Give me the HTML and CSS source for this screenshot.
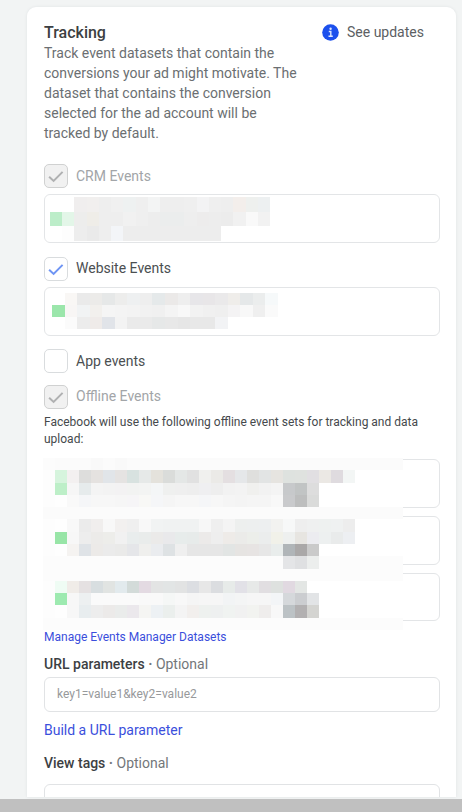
FILE: index.html
```html
<!DOCTYPE html>
<html lang="en">
<head>
<meta charset="utf-8">
<title>Tracking</title>
<link rel="stylesheet" href="styles.css">
</head>
<body>
<div class="viewport">
<main class="card">
  <header class="head">
    <div class="intro">
      <h1>Tracking</h1>
      <p>Track event datasets that contain the conversions your ad might motivate. The dataset that contains the conversion selected for the ad account will be tracked by default.</p>
    </div>
    <div class="updates">
      <svg width="17" height="17" viewBox="0 0 17 17"><circle cx="8.5" cy="8.5" r="8.3" fill="#1c50ed"/><circle cx="8.6" cy="4.7" r="1.2" fill="#dbe5ff"/><path d="M6.8 7.5h2v4.6M6.5 12.3h4.3" fill="none" stroke="#dbe5ff" stroke-width="1.4"/></svg>
      <span>See updates</span>
    </div>
  </header>

  <div class="option crm disabled">
    <span class="check"><svg viewBox="0 0 24 24"><path d="M4.5 12.8l4.9 4.6 9.8-9.9"/></svg></span><span class="label">CRM Events</span>
  </div>
  <div class="box"><div class="mosaic mosaic-crm" data-mosaic="crm"></div></div>

  <div class="option website">
    <span class="check"><svg viewBox="0 0 24 24"><path d="M4.5 12.8l4.9 4.6 9.8-9.9"/></svg></span><span class="label">Website Events</span>
  </div>
  <div class="box"><div class="mosaic mosaic-web" data-mosaic="web"></div></div>

  <div class="option app"><span class="check"></span><span class="label">App events</span></div>
  <div class="option offline disabled">
    <span class="check"><svg viewBox="0 0 24 24"><path d="M4.5 12.8l4.9 4.6 9.8-9.9"/></svg></span><span class="label">Offline Events</span>
  </div>
  <p class="note">Facebook will use the following offline event sets for tracking and data upload:</p>
  <div class="sets">
    <div class="box"></div>
    <div class="box"></div>
    <div class="box"></div>
    <div class="mosaic mosaic-sets" data-mosaic="sets"></div>
  </div>

  <a class="link manage">Manage Events Manager Datasets</a>
  <h2 class="url">URL parameters <span><b>·</b> Optional</span></h2>
  <div class="input">key1=value1&amp;key2=value2</div>
  <a class="link build">Build a URL parameter</a>
  <h2 class="tags">View tags <span><b>·</b> Optional</span></h2>
  <div class="input"></div>
</main>
</div>
<footer class="bar"></footer>
<script src="mosaic.js"></script>
</body>
</html>
```
FILE: styles.css
```css
* { box-sizing: border-box; }
body {
  margin: 0;
  height: 812px;
  overflow: hidden;
  background: #f2f4f4;
  font-family: Roboto, "Liberation Sans", sans-serif;
  font-size: 14px;
  color: #4b4f52;
}
.viewport { height: 799px; padding: 7px 6px 2px 27px; overflow: hidden; }
.card {
  height: 790px;
  padding: 15px 16px 0 17px;
  overflow: hidden;
  background: #fff;
  border-radius: 9px 9px 0 0;
  box-shadow: 0 0 3px #dfe2e3;
}
.bar { height: 13px; background: #c0c0c0; }
.head { display: flex; justify-content: space-between; height: 142px; }
.intro { width: 262px; }
h1 { margin: 0; font-size: 16px; line-height: 21px; font-weight: 500; color: #3c3f42; }
.intro p { margin: 0; line-height: 20px; color: #6b6f72; }
.updates { display: flex; gap: 8px; width: 118px; height: 20px; align-items: center; color: #5c6063; }
.updates svg { flex: none; }
.option { display: flex; gap: 8px; height: 24px; align-items: center; }
.check { width: 24px; height: 24px; border: 1px solid #d9dcde; border-radius: 5px; background: #fff; }
.check svg { display: block; width: 22px; height: 22px; fill: none; stroke: #6f95f4; stroke-width: 2.2; }
.disabled { color: #a2a5a8; }
.disabled .check { background: #f1f1f1; border-color: #d0d1d1; }
.disabled .check svg { stroke: #b0b1b2; }
.box { width: 396px; height: 49px; border: 1px solid #e3e5e7; border-radius: 6px; }
.crm, .website { margin-bottom: 6px; }
.website { margin-top: 14px; }
.app { margin-top: 13px; margin-bottom: 12px; }
.offline .label, .website .label { position: relative; top: -1px; }
.note { margin: 5px 0 11px; font-size: 12px; line-height: 17px; color: #45494c; }
.sets { position: relative; display: flex; flex-direction: column; justify-content: space-between; height: 162px; }
.sets .box:nth-child(3) { height: 48px; }
.mosaic { display: grid; }
.mosaic-crm { width: 220px; height: 44px; margin: 2px 0 0 5px; grid-template: repeat(3, 1fr) / repeat(18, 1fr); }
.mosaic-web { width: 226px; height: 36px; margin: 5px 0 0 7px; grid-template: repeat(3, 1fr) / repeat(18, 1fr); }
.mosaic-sets { position: absolute; left: -1px; top: -1px; width: 360px; height: 172px; grid-template: repeat(14, 1fr) / repeat(30, 12px); }
.link { display: block; color: #3b4fdc; }
.manage { margin-top: 7px; font-size: 12px; line-height: 18px; }
h2 { margin: 0; font-size: 14px; line-height: 20px; font-weight: 500; color: #3c4043; }
h2 span { font-weight: 400; color: #73777a; }
h2 b { font-weight: 700; }
.url { margin-top: 8px; margin-bottom: 3px; }
.input { width: 396px; height: 35px; padding: 0 12px; border: 1px solid #e1e3e5; border-radius: 6px; font-size: 12px; line-height: 33px; color: #97999b; }
.build { margin-top: 8px; line-height: 20px; }
.tags { margin-top: 13px; margin-bottom: 11px; }
```
FILE: mosaic.js
```js
// Tokens: two digits = grey level, six = colour, "." = empty, "*n" repeats the cell.
const rows = {
  crm: [
    ". . f0eeee f1efee eeeeee f0f0f0 eef1f1 ef f3f4f4 ee ee efefef f3f3f4 ef ee f3eeeb eef0ee edf0f1",
    "bcedc9 e3f6e8 ededec efede8 ee ee f1 ef ed ebeded ebeded ee edecec ed ec f1 f9 f2",
    ". fd ed ea ee f3f5f8 ed*8 . . . ."
  ],
  web: [
    ". f9f7f5 ea ecebe9 e6e8e8 ededec eef0f1 ee e5e9ea ebe9e8 ee e7e6e9 e8e6e8 eae9ea efedea e5e8e9 ebeded f6f9fa",
    "9be6ab f8f6f5 f1f3f4 f2f0ed f5 f4 f3 f1 f0 f4 f8 f2 f0 ef f4f3f4 f8 ef fa",
    ". fb ec efebe9 e1e4e9 f3 ea ea e6e8e8 e8 e6 e8 e8 f2f3f5 . . . ."
  ],
  sets: [
    "fc fb fb fb f9 fb f9 fb*23",
    "fd d6f4dd f3f0f0 dddddc e5e2e0 e1e5e9 e5e3e2 d8e2e0 e6e9e8 e4e2dc dadcda e4e7e6 e1 f0f0ee ebeae7 e4dfe1 e5e7e9 dfdfdd e2e4e4 e6e4e0 dee2df dfe2df e1dfe2 ebe8e4 dfdbdf f3f6f5 .*4",
    "fd bdefc8 f6 e6ebec f4 f3 f3f2f3 f2f3f2 f3f4f3 f4f6f7 eff0ef ef ee efeff1 ee f2 f3 f0f0ee f2 f4 c7c9cb c1c4c4 dddddd .*7",
    "fd fe f9 f5f6f8 f7 f7 f6 f6f5f7 f8f8f6 f5f6f8 f5 f7 f7 f5f6f8 f7 f5 f4 f5 f5 f8 c9cacc bdbebe dadbda .*7",
    "fb*30",
    "fd fe f8 ebebeb f0eeed f8 f2f0ef ef f8 f1f3f3 f0f2f2 f0f2f2 f0f2f2 f7 efefef f4 edefee edefef edeff0 f2f2f0 f7f8f8 eeeeee eff0f0 eef1f0 eff1f1 ededed .*4",
    "fd 98e5a7 f7 ededed ecebe9 ededea f1 e9eded e9eceb ebeae9 e9e9eb e7eceb e7ebea eceae9 ee eeebe8 ebebe9 eceeea ebeded f1f1e9 eef0ef e7e5e1 ececf0 edf0f0 e9ebeb edeff2 .*4",
    "fd fe f5f3f1 dfe3e7 eceae8 ebebeb eaeae9 e5e6e9 efefed eaecef dee2e4 efefef e6 e6 e6 e2e5e4 e6e4e2 e7e4e3 e7 e9edec b0b5b8 aaa8a8 cacaca .*7",
    "fc*20 e4e5e7 dfe0e2 eceeed fc*7",
    "fc*30",
    "fd effcf4 f0ece8 e5e1e2 d8dee0 e1e4e2 e2eaed d3dbd9 e3dae2 e3e4e4 e2e5e5 e2e3e3 dcdee2 e7 dbdde0 e7ebe9 e2e1e7 e7e9e8 e1dee1 dee1df e1d9e1 e3e6e4 .*8",
    "fd 9deab0 f7 edf0f1 fa fa fa fa f9 f9 f5f7f6 f8 f5 f6 f6 f2f4f5 f4f5f5 f6 f6 f3f5f7 d5d8db cbcdd0 e2e4e6 .*7",
    "fd fe f7 e8edef ededed eceae9 eaeceb ebe8ec f5f5f3 edf1f4 ebefed f4 f2efed eef1ef eef0f0 f0f3f1 f1 f2f3f0 efedec f8 bcc2c5 b2b0b1 d4d4d1 .*7",
    "fc*30"
  ]
};

document.querySelectorAll("[data-mosaic]").forEach(grid => {
  for (const row of rows[grid.dataset.mosaic]) {
    for (const token of row.split(" ")) {
      const [tone, count = 1] = token.split("*");
      const colour = tone === "." ? "#fff" : "#" + (tone.length === 2 ? tone.repeat(3) : tone);
      for (let i = 0; i < count; i++) {
        const cell = document.createElement("i");
        cell.style.background = colour;
        grid.append(cell);
      }
    }
  }
});
```
